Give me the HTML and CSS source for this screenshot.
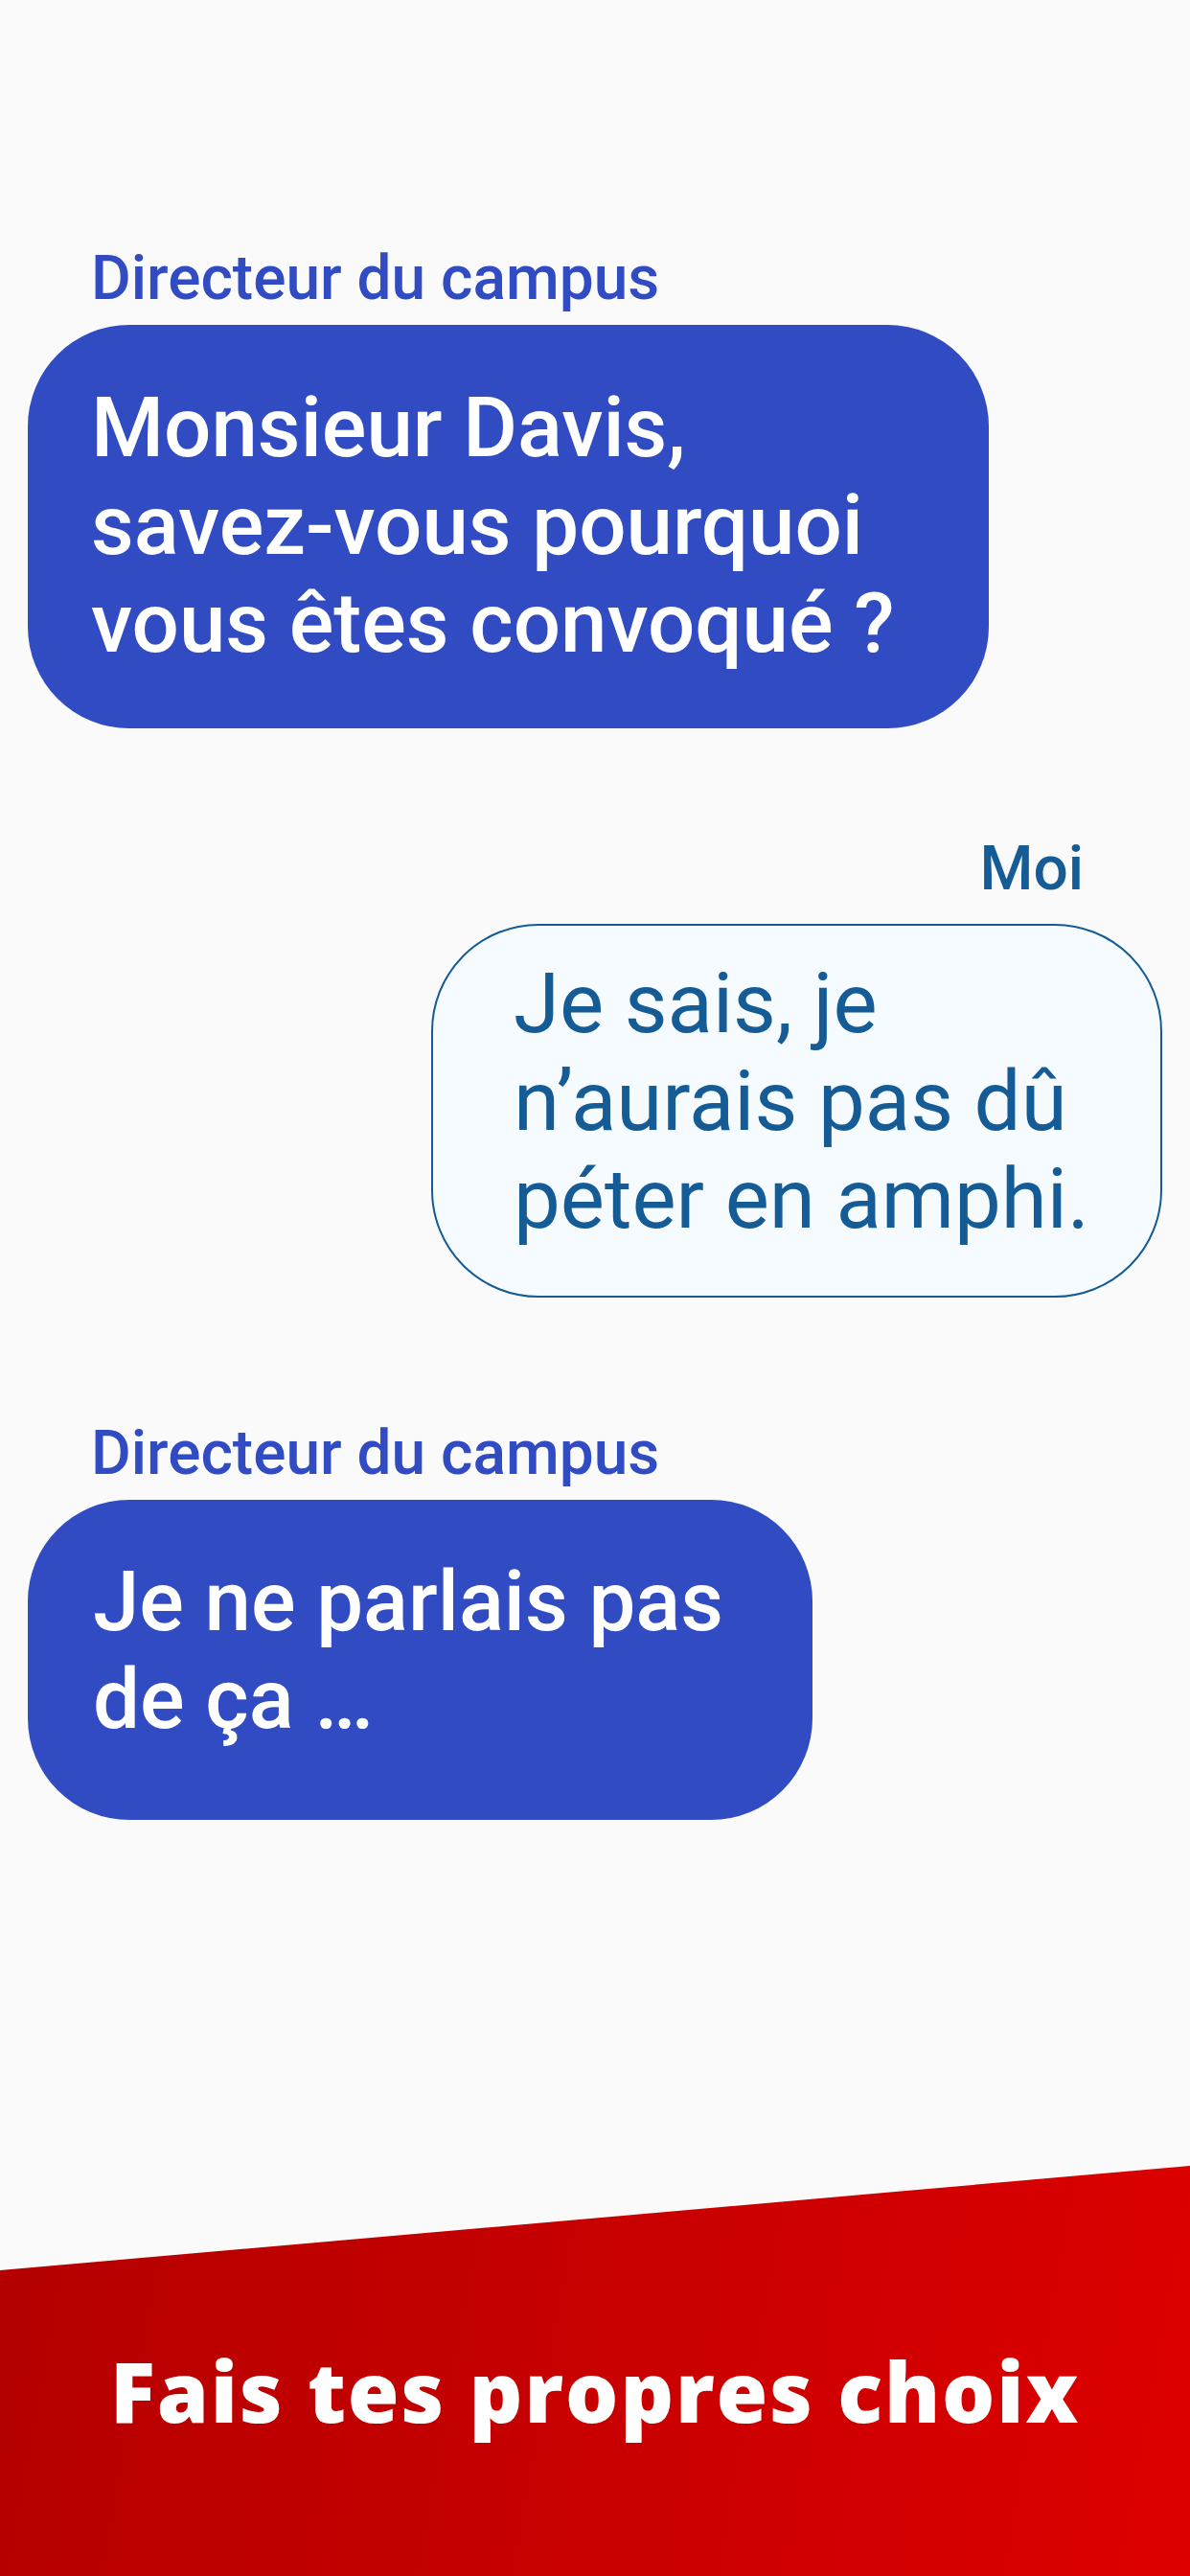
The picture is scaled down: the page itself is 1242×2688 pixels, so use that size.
FILE: index.html
```html
<!DOCTYPE html>
<html lang="fr">
<head>
<meta charset="utf-8">
<title>Fais tes propres choix</title>
<link rel="stylesheet" href="styles.css">
</head>
<body>
<div class="page">
  <main class="chat">
    <section class="msg msg--in msg--first">
      <div class="sender">Directeur du campus</div>
      <div class="bubble bubble--in bubble--wide">Monsieur Davis, savez-vous pourquoi vous êtes convoqué ?</div>
    </section>
    <section class="msg msg--out">
      <div class="sender sender--me">Moi</div>
      <div class="bubble bubble--out">Je sais, je n’aurais pas dû péter en amphi.</div>
    </section>
    <section class="msg msg--in msg--third">
      <div class="sender">Directeur du campus</div>
      <div class="bubble bubble--in bubble--short">Je ne parlais pas de ça …</div>
    </section>
  </main>
  <footer class="banner">
    <div class="banner-title">Fais tes propres choix</div>
  </footer>
</div>
</body>
</html>
```

FILE: styles.css
```css
* { box-sizing: border-box; }
html, body { margin: 0; padding: 0; }
body {
  background: #fafafa;
  font-family: Roboto, "Liberation Sans", sans-serif;
}
.page {
  width: 1242px;
  min-height: 2688px;
  display: flex;
  flex-direction: column;
}
.chat {
  display: flex;
  flex-direction: column;
  padding-top: 253px;
}
.msg { display: flex; flex-direction: column; }
.msg--in { align-self: flex-start; margin-left: 29px; }
.msg--out { align-self: flex-end; margin-right: 29px; width: 763px; margin-top: 109px; }
.msg--third { margin-top: 125px; }

.sender {
  font-size: 64px;
  font-weight: 500;
  color: #314bc3;
  line-height: normal;
  padding-left: 66px;
  margin-bottom: 11px;
}
.sender--me {
  color: #155b95;
  text-align: right;
  padding-left: 0;
  padding-right: 82px;
  margin-bottom: 20px;
}
.bubble {
  font-size: 87px;
  font-weight: 400;
  line-height: normal;
}
.bubble--in {
  background: #314bc3;
  color: #ffffff;
  font-weight: 500;
  border-radius: 106px;
}
.bubble--wide {
  width: 1003px;
  padding: 56px 60px 59px 66px;
}
.bubble--short {
  width: 819px;
  padding: 55px 50px 75px 68px;
}
.bubble--out {
  width: 763px;
  background: #f5fbff;
  color: #155b95;
  border: 2px solid #155b95;
  border-radius: 112px;
  padding: 30px 60px 50px 84px;
}

.banner {
  margin-top: auto;
  height: 428px;
  background: linear-gradient(100deg, #b40000 0%, #c80000 50%, #de0000 100%);
  clip-path: polygon(0 109px, 100% 0, 100% 100%, 0 100%);
  display: flex;
  justify-content: center;
  padding-top: 191px;
}
.banner-title {
  font-family: "Open Sans", "DejaVu Sans", sans-serif;
  font-weight: 800;
  font-size: 87px;
  line-height: 1;
  color: #ffffff;
  letter-spacing: 1.8px;
}
```
